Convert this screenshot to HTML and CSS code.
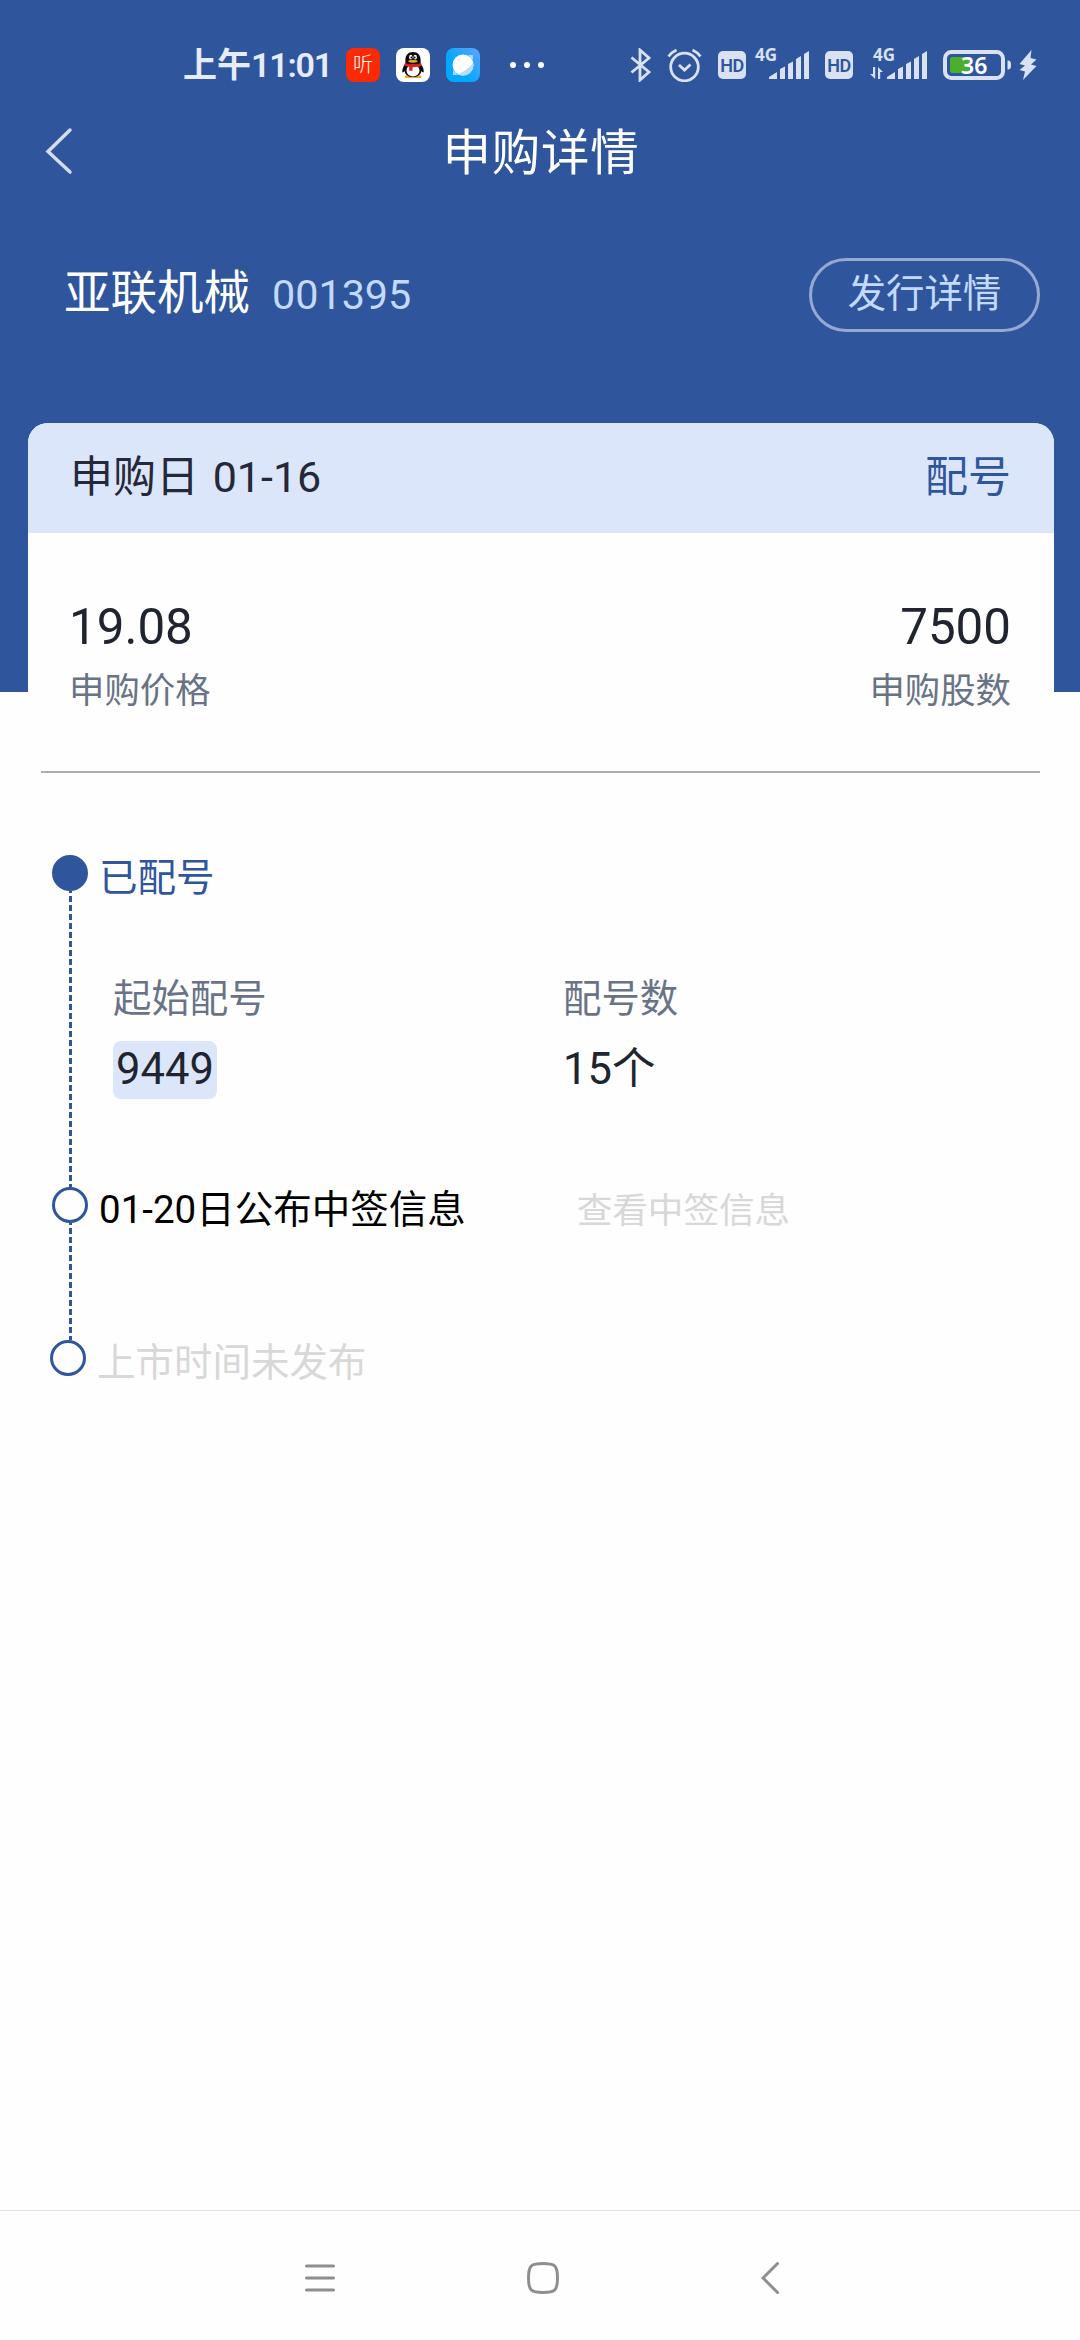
FILE: index.html
```html
<!DOCTYPE html>
<html lang="zh-CN">
<head>
    <meta charset="UTF-8">
    <meta name="viewport" content="width=device-width, initial-scale=1.0">
    <title>申购详情</title>
    <link rel="stylesheet" href="styles.css">
</head>
<body>
    <header class="hero">
        <!-- Status bar -->
        <div class="status-bar">
            <div class="status-left">
                <span class="clock">上午<span class="clock-digits">11:01</span></span>
                <span class="app-icon app-ting">听</span>
                <svg class="app-icon app-qq" viewBox="0 0 34 34">
                    <path d="M9 27.500h16c1.300 2 0 2.500-3 2.500H12c-3 0-4.300-.5-3-2.500z" fill="#f5a623"/>
                    <path d="M17 4c-5 0-7.600 3.500-7.600 8v3.500C7.500 18 6 21 6.300 24c.3 1 1.500.3 2.300-1C9.300 27 12.500 29 17 29s7.700-2 8.400-6c.8 1.300 2 2 2.300 1 .3-3-1.200-6-3.100-8.500V12c0-4.500-2.600-8-7.600-8z" fill="#0b0b0b"/>
                    <ellipse cx="17" cy="22.500" rx="6.500" ry="6" fill="#fff"/>
                    <ellipse cx="14.800" cy="9.200" rx="1.700" ry="2.400" fill="#fff"/>
                    <ellipse cx="19.200" cy="9.200" rx="1.700" ry="2.400" fill="#fff"/>
                    <circle cx="15.300" cy="9.500" r=".9"/>
                    <circle cx="18.700" cy="9.500" r=".9"/>
                    <ellipse cx="17" cy="13.300" rx="4.700" ry="1.400" fill="#f5a623"/>
                    <path d="M8.800 15c5 1.800 11.400 1.800 16.400 0l.5 2.800c-2.500 1-5.500 1.500-9.200 1.400v3.500h-3.300v-4l-4.700-1z" fill="#dc1f24"/>
                </svg>
                <svg class="app-icon app-browser" viewBox="0 0 34 34">
                    <path d="M22 7h5v5zM7 22v5h5z" fill="#a9d8ff"/>
                    <circle cx="17" cy="17" r="10.500" fill="#fff"/>
                    <path d="M27.200 14.500C24 19 18 24 12 26.200c7.500 4 17-2.500 15.200-11.700z" fill="#b9dcfb"/>
                </svg>
                <span class="dots"><i></i><i></i><i></i></span>
            </div>
            <div class="status-right">
                <svg class="bluetooth" width="22" height="34" viewBox="0 0 22 34">
                    <path d="M1.500 9.500 19 24l-9 8V2l9 8L1.500 24.500"/>
                </svg>
                <svg class="alarm" width="35" height="34" viewBox="0 0 35 34">
                    <circle cx="17.500" cy="19" r="13.800"/>
                    <path d="M12 17l5.500 5 6-5.500M1.500 8.500Q5 4 9.500 2M33.500 8.500Q30 4 25.500 2"/>
                </svg>
                <span class="hd">HD</span>
                <svg class="cell" width="53" height="34" viewBox="0 0 53 34">
                    <text x="-1" y="13">4G</text>
                    <path d="M13 31v-2l8-5v7zM24 31V21l5-2.500V31zM32 31V16l5-2.500V31zM40 31V11l5-3v23zM48 31V6l5-3v28z"/>
                </svg>
                <span class="hd hd-second">HD</span>
                <svg class="cell cell-second" width="57" height="34" viewBox="0 0 57 34">
                    <text x="3" y="13">4G</text>
                    <path d="M3 19h2.200v12L0 26h3zM8 31V19l5 5h-2.800v7z"/>
                    <path d="M17 31v-2l8-5v7zM28 31V21l5-2.500V31zM36 31V16l5-2.500V31zM44 31V11l5-3v23zM52 31V6l5-3v28z"/>
                </svg>
                <svg class="battery" width="68" height="30" viewBox="0 0 68 30">
                    <rect class="battery-case" x="2" y="2" width="58" height="26" rx="6.500"/>
                    <rect class="battery-level" x="7" y="7" width="19" height="16" rx="2.500"/>
                    <path class="battery-cap" d="M64.500 10.500c3 0 3.500 1.500 3.500 4.500s-.5 4.500-3.500 4.500z"/>
                    <text x="18" y="23.500">36</text>
                </svg>
                <svg class="bolt" width="18" height="30" viewBox="0 0 18 30">
                    <path d="M12.500 0 .5 14l5.500 1.500L.5 20l5.500 1.500L4 30l13.500-14-5.500-1.500 5.500-5L11.500 8z"/>
                </svg>
            </div>
        </div>

        <!-- Title bar -->
        <div class="title-bar">
            <svg class="back" width="28" height="48" viewBox="0 0 28 48">
                <path d="M25 3 3 24.500 25 45"/>
            </svg>
            <h1>申购详情</h1>
        </div>

        <div class="stock">
            <span class="stock-name">亚联机械</span>
            <span class="stock-code">001395</span>
            <button class="detail-button">发行详情</button>
        </div>
    </header>

    <main class="card">
        <div class="card-header">
            <span>申购日 01-16</span>
            <span class="card-status">配号</span>
        </div>
        <div class="summary">
            <div class="summary-item">
                <span class="summary-value">19.08</span>
                <span class="summary-label">申购价格</span>
            </div>
            <div class="summary-item summary-right">
                <span class="summary-value">7500</span>
                <span class="summary-label">申购股数</span>
            </div>
        </div>

        <!-- Progress steps -->
        <ol class="timeline">
            <li class="step step-allotted">
                <div class="marker"><i class="circle circle-done"></i><i class="line"></i></div>
                <div class="step-body">
                    <p class="step-title">已配号</p>
                    <div class="fields">
                        <div class="field">
                            <span class="field-label">起始配号</span>
                            <span class="field-value badge">9449</span>
                        </div>
                        <div class="field">
                            <span class="field-label">配号数</span>
                            <span class="field-value">15个</span>
                        </div>
                    </div>
                </div>
            </li>
            <li class="step step-draw">
                <div class="marker"><i class="circle"></i><i class="line"></i></div>
                <div class="step-body">
                    <p class="step-title">01-20日公布中签信息</p>
                    <span class="step-link">查看中签信息</span>
                </div>
            </li>
            <li class="step step-listing">
                <div class="marker"><i class="circle"></i></div>
                <div class="step-body">
                    <p class="step-title">上市时间未发布</p>
                </div>
            </li>
        </ol>
    </main>

    <!-- System navigation -->
    <nav class="nav-bar">
        <svg class="nav-menu" width="30" height="34" viewBox="0 0 30 34">
            <path d="M1.500 5h27M1.500 17h27M1.500 29h27"/>
        </svg>
        <svg class="nav-home" width="32" height="34" viewBox="0 0 32 34">
            <path d="M16 2.500c11.500 0 14.500 1.500 14.500 14.500S27.500 31.500 16 31.500 1.500 30 1.500 17 4.500 2.500 16 2.500z"/>
        </svg>
        <svg class="nav-back" width="18" height="34" viewBox="0 0 18 34">
            <path d="M16.500 2.500 2 17l14.500 14.500"/>
        </svg>
    </nav>
</body>
</html>
```

FILE: styles.css
```css
* {
    margin: 0;
    padding: 0;
    box-sizing: border-box;
}

body {
    font-family: Roboto, "Noto Sans CJK SC", sans-serif;
    width: 1080px;
    height: 2340px;
    display: flex;
    flex-direction: column;
    background: #fefefe;
    color: #20242f;
    overflow: hidden;
}

svg {
    display: block;
    flex: none;
}

.hero {
    flex: none;
    height: 692px;
    background: #2f569d;
}

/* Status bar */
.status-bar {
    display: flex;
    justify-content: space-between;
    align-items: center;
    height: 108px;
    padding: 22px 43px 0 183px;
}

.status-left,
.status-right {
    display: flex;
    align-items: center;
}

.clock {
    display: flex;
    width: 163px;
    color: #e6ecfa;
    font-size: 34px;
    font-weight: 600;
    line-height: 40px;
    white-space: nowrap;
}

.clock-digits {
    letter-spacing: -1.200px;
}

.app-icon {
    width: 34px;
    height: 34px;
    border-radius: 8px;
    margin-right: 16px;
}

.app-ting {
    background: #fa2a05;
    color: #fff;
    font-size: 20px;
    font-weight: 300;
    line-height: 34px;
    text-align: center;
}

.app-qq {
    background: #fff;
}

.app-browser {
    background: linear-gradient(50deg, #00a8ff 35%, #5fa4fb 100%);
}

.dots {
    display: flex;
    gap: 8px;
    margin-left: 14px;
}

.dots i {
    width: 6px;
    height: 6px;
    border-radius: 50%;
    background: #fff;
}

.bluetooth,
.alarm {
    fill: none;
    stroke: #d9e1f2;
    stroke-width: 2.800;
}

.alarm {
    margin: 0 16px 0 15px;
}

.hd {
    width: 28px;
    height: 28px;
    border-radius: 5px;
    background: #d9e1f2;
    color: #2f569d;
    font-size: 18px;
    font-weight: 600;
    letter-spacing: -0.5px;
    line-height: 29px;
    text-align: center;
}

.hd-second {
    margin-left: 16px;
}

.cell {
    margin-left: 10px;
    fill: #d9e1f2;
    font-family: "Noto Sans", sans-serif;
    font-size: 17px;
    font-weight: 700;
    overflow: visible;
}

.cell-second {
    margin-left: 17px;
}

.battery {
    margin: 0 8px 0 16px;
    font-family: "Noto Sans", sans-serif;
    font-size: 23px;
    font-weight: 600;
    fill: #fff;
}

.battery-case {
    fill: none;
    stroke: #d9e1f2;
    stroke-width: 4;
}

.battery-level {
    fill: #4caf2b;
}

.battery-cap,
.bolt {
    fill: #d9e1f2;
}

/* Title bar */
.title-bar {
    display: grid;
    grid-template-columns: 28px 1fr 28px;
    align-items: center;
    height: 92px;
    padding: 0 45px;
}

.back {
    margin-top: -6px;
    fill: none;
    stroke: #d5dcee;
    stroke-width: 3.500;
    stroke-linecap: round;
}

.title-bar h1 {
    padding-left: 2px;
    color: #fff;
    font-size: 48.500px;
    font-weight: 400;
    letter-spacing: 0.8px;
    line-height: 60px;
    text-align: center;
}

.stock {
    display: flex;
    align-items: center;
    height: 190px;
    padding: 0 40px 0 64px;
}

.stock-name {
    margin-top: -4px;
    color: #fff;
    font-size: 46.500px;
    line-height: 60px;
}

.stock-code {
    margin-left: 22px;
    color: #c3dafe;
    font-size: 41.300px;
    line-height: 60px;
}

.detail-button {
    width: 231px;
    height: 74px;
    margin-left: auto;
    padding-bottom: 2px;
    border: 3px solid #95a9d3;
    border-radius: 37px;
    background: transparent;
    color: #c3dafe;
    font-family: inherit;
    font-size: 38.400px;
    line-height: 64px;
}

/* Card */
.card {
    flex: 1;
    width: 1026px;
    margin: -269px auto 0 28px;
    border-radius: 20px 20px 0 0;
    background: #fefefe;
    overflow: hidden;
}

.card-header {
    display: flex;
    justify-content: space-between;
    align-items: center;
    height: 110px;
    padding: 0 43px 2px 42px;
    background: #dbe6fa;
    color: #252838;
    font-size: 43px;
    line-height: 56px;
    word-spacing: 3px;
}

.card-status {
    color: #2f569d;
}

.summary {
    display: flex;
    justify-content: space-between;
    height: 240px;
    margin: 0 14px 0 13px;
    padding: 65px 29px 0 28px;
    border-bottom: 2px solid #a9aeb8;
}

.summary-item {
    display: flex;
    flex-direction: column;
    gap: 10px;
}

.summary-right {
    align-items: flex-end;
}

.summary-value {
    font-size: 49.300px;
    line-height: 58px;
}

.summary-label {
    color: #697386;
    font-size: 35.400px;
    line-height: 50px;
}

/* Timeline */
.timeline {
    list-style: none;
    margin-top: 82px;
    padding-left: 24px;
}

.step {
    display: flex;
}

.step-allotted {
    height: 332px;
    color: #2f569d;
}

.step-draw {
    height: 153px;
    color: #000;
}

.step-listing {
    color: #d8d8d8;
}

.marker {
    display: flex;
    flex-direction: column;
    flex: none;
    width: 36px;
}

.circle {
    flex: none;
    width: 36px;
    height: 36px;
    border: 3px solid #2f569d;
    border-radius: 50%;
}

.circle-done {
    background: #2f569d;
}

.line {
    flex: 1;
    width: 3px;
    margin-left: 17px;
    background: repeating-linear-gradient(#2f569d 0 2px, transparent 2px 5px, #2f569d 5px 9px);
}

.step-listing .marker {
    margin-left: -2px;
}

.step-body {
    flex: 1;
    padding-left: 11px;
}

.step-draw .step-body {
    display: flex;
}

.step-title {
    font-size: 38.500px;
    line-height: 45px;
}

.step-link {
    margin-left: 111px;
    color: #d8d8d8;
    font-size: 35.600px;
    line-height: 48px;
}

.fields {
    display: grid;
    grid-template-columns: 450px 1fr;
    margin-top: 74px;
    padding-left: 14px;
}

.field {
    display: flex;
    flex-direction: column;
    align-items: flex-start;
    gap: 18px;
}

.field-label {
    color: #697386;
    font-size: 38.400px;
    line-height: 49px;
}

.field-value {
    color: #20242f;
    font-size: 43.500px;
    line-height: 58px;
}

.badge {
    width: 104px;
    border-radius: 8px;
    background: #dbe6fa;
    text-align: center;
}

/* System navigation */
.nav-bar {
    display: flex;
    align-items: center;
    flex: none;
    height: 130px;
    padding: 4px 301px 0 305px;
    border-top: 1px solid #e3e3e3;
    fill: none;
    stroke: #8e8e8e;
    stroke-width: 3;
    stroke-linecap: round;
}

.nav-home {
    margin: 0 202px 0 192px;
}
```
